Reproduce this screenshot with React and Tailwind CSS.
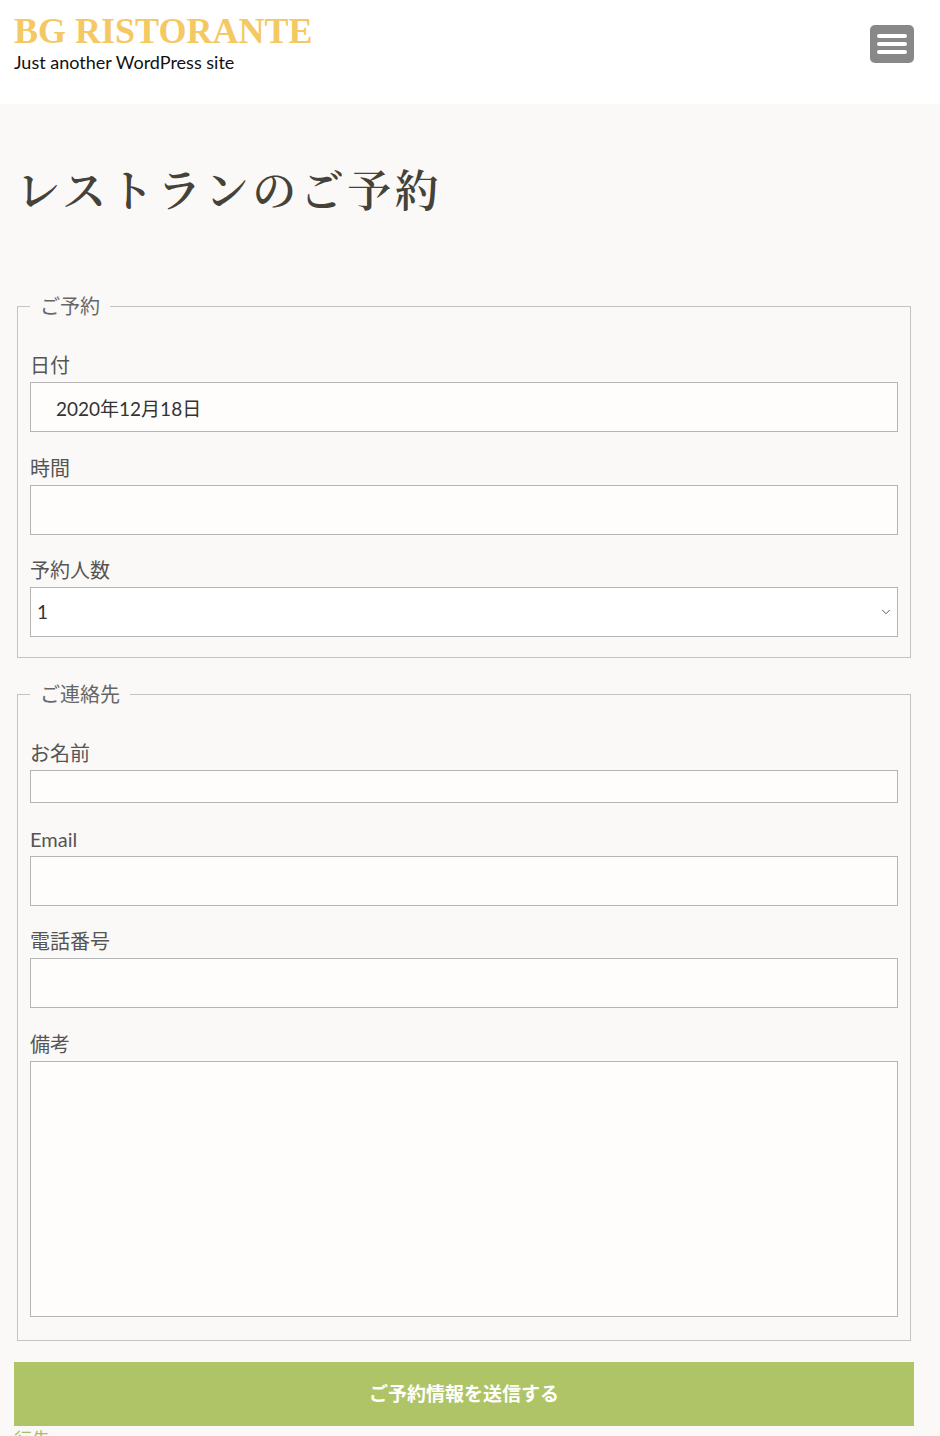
import { ChevronDown } from 'lucide-react';

const font = "font-['Lato','Noto_Sans_CJK_JP',sans-serif]";

const Field = ({ label, className = "mb-[23px]", children }) => (
  <div className={className}>
    <label className="block text-[20px] leading-[27px] mb-[3px] text-[#555]">{label}</label>
    {children}
  </div>
);

const inputCls = "block w-full bg-[#fefdfb] border border-[#b5b5b5] text-[19px] text-[#333] outline-none";

const App = () => {
  return (
    <div className={`${font} bg-[#faf9f7] min-h-[1436px]`}>
      <header className="bg-white h-[104px] flex justify-between pl-[14px] pr-[26px]">
        <div className="pt-[12px]">
          <div className="font-['Liberation_Serif',serif] font-bold text-[36px] leading-[39px] text-[#f4c862]">BG RISTORANTE</div>
          <div className="text-[18px] leading-[22px] text-[#111]">Just another WordPress site</div>
        </div>
        <div className="pt-[25px]">
          <button className="w-[44px] h-[38px] rounded-[5px] bg-[#888] flex flex-col items-center justify-center gap-[4px]">
            <span className="block w-[30px] h-[4px] rounded-full bg-white"></span>
            <span className="block w-[30px] h-[4px] rounded-full bg-white"></span>
            <span className="block w-[30px] h-[4px] rounded-full bg-white"></span>
          </button>
        </div>
      </header>

      <main className="pl-[14px] pr-[26px] pt-[58px]">
        <h1 className="font-['Noto_Serif_CJK_JP','Noto_Sans_CJK_JP',serif] text-[44px] leading-[53px] tracking-[3.5px] text-[#45423a] pl-[2px] font-semibold">レストランのご予約</h1>

        <fieldset className="mt-[78px] mx-[3px] border border-[#c4c4c4] px-[12px] pt-[32px] pb-[20px]">
          <legend className="px-[10px] text-[20px] leading-[27px] text-[#666]">ご予約</legend>
          <Field label="日付">
            <input className={`${inputCls} h-[50px] pl-[25px]`} defaultValue="2020年12月18日" />
          </Field>
          <Field label="時間" className="mb-[22px]">
            <input className={`${inputCls} h-[50px] px-[8px]`} />
          </Field>
          <Field label="予約人数" className="">
            <div className="relative">
              <select className={`${inputCls} appearance-none h-[50px] pl-[6px] border-[#777] bg-white`} defaultValue="1">
                <option>1</option>
                <option>2</option>
                <option>3</option>
              </select>
              <ChevronDown size={14} strokeWidth={1.5} className="absolute right-[5px] top-[18px] text-[#444] pointer-events-none" />
            </div>
          </Field>
        </fieldset>

        <fieldset className="mt-[23px] mx-[3px] border border-[#c4c4c4] px-[12px] pt-[32px] pb-[23px]">
          <legend className="px-[10px] text-[20px] leading-[27px] text-[#666]">ご連絡先</legend>
          <Field label="お名前">
            <input className={`${inputCls} h-[33px] px-[8px]`} />
          </Field>
          <Field label="Email" className="mb-[22px]">
            <input className={`${inputCls} h-[50px] px-[8px]`} />
          </Field>
          <Field label="電話番号">
            <input className={`${inputCls} h-[50px] px-[8px]`} />
          </Field>
          <Field label="備考" className="">
            <textarea className={`${inputCls} h-[256px] p-[8px] resize-none`} />
          </Field>
        </fieldset>

        <button className="mt-[21px] w-full h-[64px] bg-[#afc466] text-white font-bold text-[19px]">ご予約情報を送信する</button>
        <div className="text-[18px] leading-[27px] text-[#a9bd62]">行先</div>
      </main>
    </div>
  );
};

export default App;
